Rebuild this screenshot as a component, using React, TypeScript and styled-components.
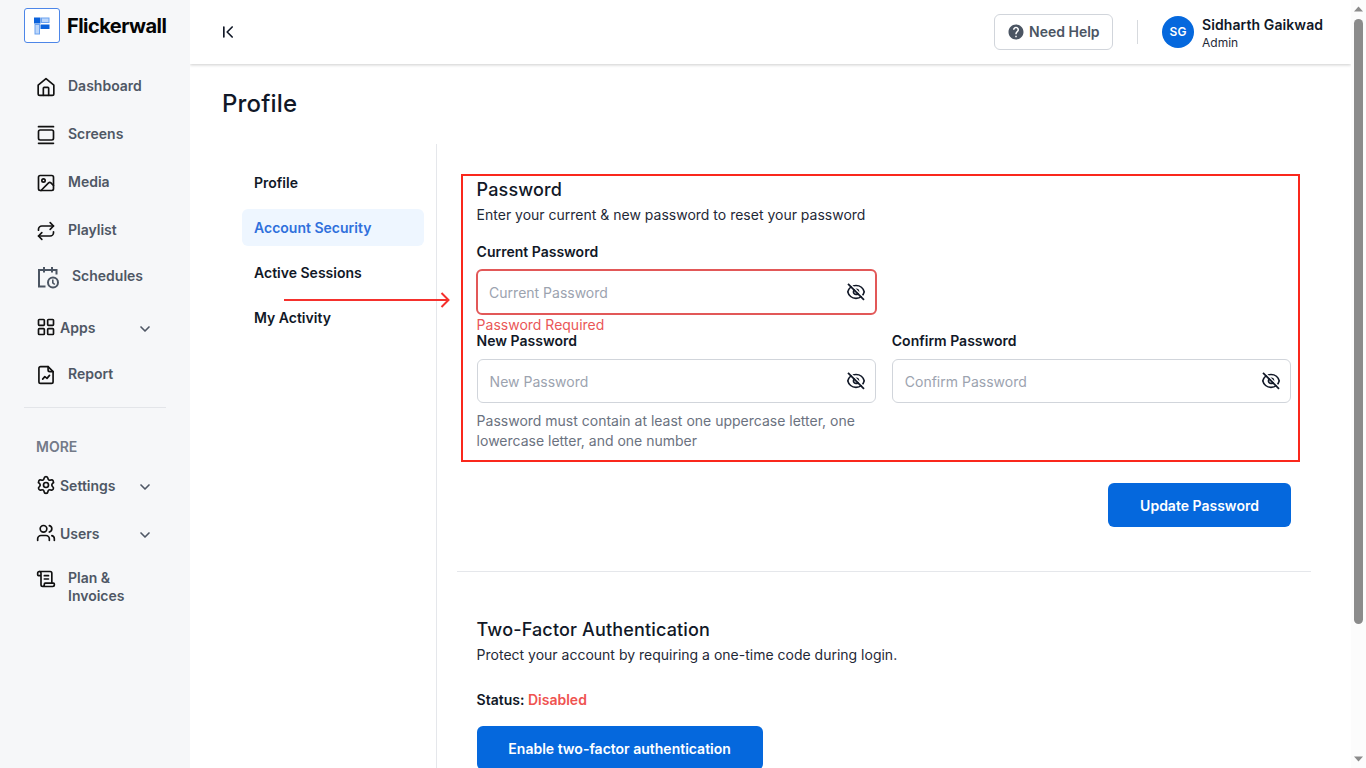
import React from "react";
import styled, { createGlobalStyle, css } from "styled-components";
import {
  ChevronDown,
  ChevronFirst,
  GalleryVertical,
  Image as ImageIcon,
  LayoutGrid,
  Repeat,
  ScrollText,
  Settings,
  Users,
} from "lucide-react";
import { MdHelp } from "react-icons/md";

const GlobalStyle = createGlobalStyle`
  *, *::before, *::after { box-sizing: border-box; }
  body {
    margin: 0;
    overflow: hidden;
    background: #fff;
    color: #111827;
    font-family: Inter, "Liberation Sans", sans-serif;
    font-size: 14px;
    line-height: 20px;
  }
  h1, h2, p { margin: 0; }
  svg { display: block; flex: none; }
`;

const Shell = styled.div`
  position: relative;
  display: flex;
  width: 1366px;
  height: 768px;
  overflow: hidden;
`;

/* Sidebar */

const Sidebar = styled.aside`
  flex: none;
  width: 190px;
  padding-top: 8px;
  background: #f6f7f9;
`;

const Brand = styled.div`
  display: flex;
  align-items: center;
  gap: 7px;
  height: 35px;
  margin-bottom: 19px;
  padding-left: 24px;
`;

const BrandMark = styled.div`
  display: grid;
  place-items: center;
  width: 36px;
  height: 35px;
  border: 1px solid #4d86e8;
  border-radius: 3px;
  background: #fff;
`;

const BrandName = styled.span`
  color: #050505;
  font-size: 20px;
  font-weight: 700;
  letter-spacing: -0.53px;
`;

const NavRow = styled.a<{ $height: number; $gap?: number; $shift?: number }>`
  display: flex;
  align-items: center;
  gap: ${({ $gap = 12 }) => $gap}px;
  height: ${({ $height }) => $height}px;
  padding: 0 37px 0 36px;
  color: #4f5765;
  font-weight: 600;
  > svg:first-child {
    color: #111;
    transform: translateY(${({ $shift = 1 }) => $shift}px);
  }
  > svg:last-child {
    transform: translateY(1px);
  }
`;

const NavLabel = styled.span<{ $drop?: number }>`
  flex: 1;
  padding-bottom: ${({ $drop = 0 }) => $drop}px;
  line-height: 18px;
`;

const Rule = styled.hr`
  height: 1px;
  margin: 14px 24px 29px;
  border: 0;
  background: #e3e5e9;
`;

const NavHeading = styled.div`
  height: 25px;
  padding-left: 36px;
  color: #737a88;
  font-weight: 600;
`;

/* Main column */

const Main = styled.main`
  display: flex;
  flex: 1;
  flex-direction: column;
  min-width: 0;
`;

const Header = styled.header`
  display: flex;
  flex: none;
  align-items: center;
  height: 64px;
  padding: 0 28px;
  box-shadow: 0 1px 3px rgba(0, 0, 0, 0.2);
  clip-path: inset(0 0 -6px 0);
`;

const HelpButton = styled.button`
  display: flex;
  align-items: center;
  gap: 4px;
  width: 119px;
  height: 36px;
  margin-left: auto;
  padding: 0 0 0 12px;
  border: 1px solid #d1d5db;
  border-radius: 6px;
  background: #fff;
  color: #4b5563;
  font: 600 14px/20px Inter, sans-serif;
`;

const Separator = styled.span`
  width: 1px;
  height: 24px;
  margin: 0 24px;
  background: #d7dade;
`;

const Avatar = styled.span`
  display: grid;
  place-items: center;
  width: 32px;
  height: 32px;
  margin-right: 8px;
  border-radius: 50%;
  background: #0568dd;
  color: #fff;
  font-size: 12px;
  font-weight: 600;
`;

const Account = styled.div`
  display: flex;
  flex-direction: column;
  width: 121px;
  padding-top: 2px;
  white-space: nowrap;
`;

const AccountName = styled.span`
  font-weight: 600;
  letter-spacing: 0.09px;
  line-height: 18px;
`;

const AccountRole = styled.span`
  color: #1f2937;
  font-size: 12px;
  line-height: 17px;
`;

const PageTitle = styled.h1`
  padding: 24px 32px 25px;
  font-size: 24px;
  font-weight: 500;
  letter-spacing: 0.18px;
  line-height: 31px;
`;

const Columns = styled.div`
  display: flex;
  flex: 1;
`;

const SubNav = styled.nav`
  display: flex;
  flex: none;
  flex-direction: column;
  gap: 8px;
  width: 247px;
  padding: 20px 12px 0 52px;
  border-right: 1px solid #e5e7eb;
`;

const SubNavItem = styled.a<{ $active?: boolean }>`
  height: 37px;
  padding: 0 12px;
  border-radius: 6px;
  font-weight: 600;
  line-height: 38px;
  ${({ $active }) =>
    $active &&
    css`
      background: #eef6ff;
      color: #2f70dc;
    `}
`;

const Content = styled.div`
  flex: 1;
  padding: 35px 40px 0 20px;
`;

const Section = styled.section`
  padding: 0 20px 0 19.6px;
`;

const SectionTitle = styled.h2`
  font-size: 18px;
  font-weight: 500;
  letter-spacing: 0.15px;
  line-height: 22px;
`;

const Description = styled.p`
  margin-top: 4px;
  color: #1f2937;
`;

const FieldGrid = styled.div<{ $top: number }>`
  display: grid;
  grid-template-columns: 1fr 1fr;
  gap: 16px;
  margin-top: ${({ $top }) => $top}px;
`;

const Field = styled.div`
  min-width: 0;
`;

const FieldLabel = styled.div`
  font-weight: 600;
`;

const InputBox = styled.div<{ $invalid?: boolean }>`
  display: flex;
  align-items: center;
  justify-content: space-between;
  height: ${({ $invalid }) => ($invalid ? 46 : 44)}px;
  margin: ${({ $invalid }) => ($invalid ? "7px -1px 0" : "8px 0 0")};
  padding: 0 9px 0 ${({ $invalid }) => ($invalid ? 11.5 : 12)}px;
  border: ${({ $invalid }) => ($invalid ? "2px solid #e25858" : "1px solid #d1d5db")};
  border-radius: 6px;
  color: #9ca3af;
  > span { padding-top: 2px; }
  > svg { color: #111827; }
`;

const ErrorText = styled.div`
  height: 16px;
  color: #ea5757;
`;

const Hint = styled.p`
  margin-top: 8px;
  color: #6b7280;
`;

const PrimaryButton = styled.button<{ $width: number }>`
  display: block;
  width: ${({ $width }) => $width}px;
  height: 44px;
  padding: 2px 0 0;
  border: 0;
  border-radius: 6px;
  background: #0568dd;
  color: #fff;
  font: 600 14px/20px Inter, sans-serif;
`;

const Actions = styled.div`
  display: flex;
  justify-content: flex-end;
  margin-top: 32px;
`;

const SectionRule = styled.hr`
  height: 1px;
  margin: 44px 0 47px;
  border: 0;
  background: #e5e7eb;
`;

const Status = styled.p`
  margin: 25px 0 16px;
  font-weight: 600;
  span { color: #ef5350; }
`;

/* Scrollbar */

const ScrollTrack = styled.div`
  display: flex;
  flex: none;
  flex-direction: column;
  align-items: center;
  width: 15px;
  padding: 6px 0;
  background: #fcfcfc;
`;

const ScrollThumb = styled.div`
  width: 9px;
  height: 605px;
  margin: 7px 0 auto;
  border-radius: 5px;
  background: #8b8b8b;
`;

/* Annotations over the page */

const Callout = styled.div`
  position: absolute;
  top: 174px;
  left: 461px;
  width: 839px;
  height: 288px;
  border: 2px solid #fa281c;
  pointer-events: none;
`;

const ArrowSvg = styled.svg`
  position: absolute;
  top: 290px;
  left: 284px;
`;

const Stroke = ({ children, size = 20 }: { children: React.ReactNode; size?: number }) => (
  <svg
    width={size}
    height={size}
    viewBox="0 0 24 24"
    fill="none"
    stroke="currentColor"
    strokeWidth={2}
    strokeLinecap="round"
    strokeLinejoin="round"
  >
    {children}
  </svg>
);

const HomeIcon = () => (
  <Stroke>
    <path d="M2.600 9.800 12 2l9.400 7.800V20a2 2 0 0 1-2 2H4.600a2 2 0 0 1-2-2Z" />
    <path d="M8.800 22v-8.500a1 1 0 0 1 1-1h4.400a1 1 0 0 1 1 1V22" />
  </Stroke>
);

const ReportIcon = () => (
  <Stroke>
    <path d="M14.500 2H5.500A2 2 0 0 0 3.500 4v16a2 2 0 0 0 2 2h13a2 2 0 0 0 2-2V8Z" />
    <path d="M14.500 2v4a2 2 0 0 0 2 2h4" />
    <path d="m8 17 2.600-3 2.600 2 3-3.500" />
  </Stroke>
);

const ScheduleIcon = () => (
  <svg width="24" height="24" viewBox="0 0 24 24" fill="none" stroke="#4b5563" strokeWidth="2">
    <path d="M9.500 20.500H3V4h17.500V8.500" />
    <path d="M8 1v5.500M16 1v5.500" />
    <circle cx="17" cy="16.500" r="5" />
    <path d="M16.800 13.500v3.300l2 1.700" strokeWidth="1.600" />
  </svg>
);

const EyeOffIcon = () => (
  <svg width="20" height="20" viewBox="0 0 20 20" fill="none" stroke="currentColor" strokeWidth="1.700">
    <path d="M1.800 9.900C2.600 6.300 5.800 3.500 10 3.500s7.400 2.800 8.200 6.400c-.8 3.600-4 6.400-8.200 6.400S2.600 13.500 1.800 9.900Z" />
    <circle cx="10" cy="9.900" r="2.500" />
    <path d="m3.200 1 15 15" stroke="#fff" strokeWidth="1.500" />
    <path d="m2 1.800 16 16" />
  </svg>
);

const BrandIcon = () => (
  <svg width="16" height="18" viewBox="0 0 16 18">
    <rect x="0" y="0.500" width="6.500" height="6" fill="#0b62dc" />
    <rect x="7.500" y="1" width="7.500" height="4.500" fill="#bcd6fa" stroke="#6ba2f0" />
    <rect x="1" y="7.500" width="4.500" height="9.500" fill="#bcd6fa" stroke="#6ba2f0" />
    <rect x="6.500" y="7.500" width="9" height="4.500" fill="#0b62dc" />
  </svg>
);

const PasswordInput = ({ label, invalid }: { label: string; invalid?: boolean }) => (
  <>
    <FieldLabel>{label}</FieldLabel>
    <InputBox $invalid={invalid}>
      <span>{label}</span>
      <EyeOffIcon />
    </InputBox>
  </>
);

const subNav = ["Profile", "Account Security", "Active Sessions", "My Activity"];

export default function App() {
  return (
    <Shell>
      <GlobalStyle />
      <Sidebar>
        <Brand>
          <BrandMark>
            <BrandIcon />
          </BrandMark>
          <BrandName>Flickerwall</BrandName>
        </Brand>
        <NavRow $height={48}>
          <HomeIcon />
          <NavLabel>Dashboard</NavLabel>
        </NavRow>
        <NavRow $height={48}>
          <GalleryVertical size={20} />
          <NavLabel>Screens</NavLabel>
        </NavRow>
        <NavRow $height={48}>
          <ImageIcon size={20} />
          <NavLabel>Media</NavLabel>
        </NavRow>
        <NavRow $height={48}>
          <Repeat size={20} />
          <NavLabel>Playlist</NavLabel>
        </NavRow>
        <NavRow $height={46}>
          <ScheduleIcon />
          <NavLabel $drop={2}>Schedules</NavLabel>
        </NavRow>
        <NavRow $height={55} $gap={4} $shift={-1}>
          <LayoutGrid size={20} />
          <NavLabel>Apps</NavLabel>
          <ChevronDown size={16} strokeWidth={2.5} />
        </NavRow>
        <NavRow $height={38}>
          <ReportIcon />
          <NavLabel>Report</NavLabel>
        </NavRow>
        <Rule />
        <NavHeading>MORE</NavHeading>
        <NavRow $height={48} $gap={4} $shift={-1}>
          <Settings size={20} />
          <NavLabel>Settings</NavLabel>
          <ChevronDown size={16} strokeWidth={2.5} />
        </NavRow>
        <NavRow $height={48} $gap={4} $shift={-1}>
          <Users size={20} />
          <NavLabel>Users</NavLabel>
          <ChevronDown size={16} strokeWidth={2.5} />
        </NavRow>
        <NavRow $height={58} $shift={-8}>
          <ScrollText size={20} />
          <NavLabel>Plan &amp; Invoices</NavLabel>
        </NavRow>
      </Sidebar>

      <Main>
        <Header>
          <ChevronFirst size={20} />
          <HelpButton>
            <MdHelp size={18} />
            Need Help
          </HelpButton>
          <Separator />
          <Avatar>SG</Avatar>
          <Account>
            <AccountName>Sidharth Gaikwad</AccountName>
            <AccountRole>Admin</AccountRole>
          </Account>
        </Header>
        <PageTitle>Profile</PageTitle>
        <Columns>
          <SubNav>
            {subNav.map((item) => (
              <SubNavItem key={item} $active={item === "Account Security"}>
                {item}
              </SubNavItem>
            ))}
          </SubNav>
          <Content>
            <Section>
              <SectionTitle>Password</SectionTitle>
              <Description>Enter your current &amp; new password to reset your password</Description>
              <FieldGrid $top={17}>
                <Field>
                  <PasswordInput label="Current Password" invalid />
                  <ErrorText>Password Required</ErrorText>
                </Field>
              </FieldGrid>
              <FieldGrid $top={0}>
                <Field>
                  <PasswordInput label="New Password" />
                  <Hint>Password must contain at least one uppercase letter, one lowercase letter, and one number</Hint>
                </Field>
                <Field>
                  <PasswordInput label="Confirm Password" />
                </Field>
              </FieldGrid>
              <Actions>
                <PrimaryButton $width={183}>Update Password</PrimaryButton>
              </Actions>
            </Section>
            <SectionRule />
            <Section>
              <SectionTitle>Two-Factor Authentication</SectionTitle>
              <Description>Protect your account by requiring a one-time code during login.</Description>
              <Status>
                Status: <span>Disabled</span>
              </Status>
              <PrimaryButton $width={286}>Enable two-factor authentication</PrimaryButton>
            </Section>
          </Content>
        </Columns>
      </Main>

      <ScrollTrack>
        <svg width="9" height="6" viewBox="0 0 9 6">
          <path d="M0 5.500 4.500 0.500 9 5.500Z" fill="#8b8b8b" />
        </svg>
        <ScrollThumb />
        <svg width="9" height="6" viewBox="0 0 9 6">
          <path d="M0 0.500 4.500 5.500 9 0.500Z" fill="#8b8b8b" />
        </svg>
      </ScrollTrack>

      <Callout />
      <ArrowSvg width="168" height="20" viewBox="0 0 168 20" fill="none" stroke="#f5312d" strokeWidth="2">
        <path d="M0 10h164" />
        <path d="m157.500 3 7 7-7 7" />
      </ArrowSvg>
    </Shell>
  );
}
